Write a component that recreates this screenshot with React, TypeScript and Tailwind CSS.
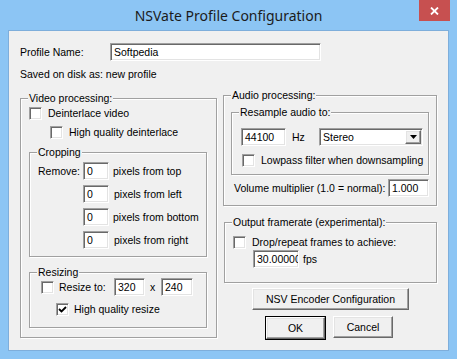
import type { ReactNode } from "react";

const sunken =
  "bg-white border border-t-[#a0a0a0] border-l-[#a0a0a0] border-r-white border-b-white shadow-[inset_1px_1px_0_#696969,inset_-1px_-1px_0_#e3e3e3]";
const raised =
  "bg-[#f0f0f0] border border-t-white border-l-white border-r-[#696969] border-b-[#696969] shadow-[inset_-1px_-1px_0_#a0a0a0,inset_1px_1px_0_#e3e3e3]";

function Check({ checked = false }: { checked?: boolean }) {
  return (
    <div className={`flex h-[13px] w-[13px] shrink-0 items-center justify-center ${sunken}`}>
      {checked && (
        <svg width="9" height="9" viewBox="0 0 9 9">
          <path d="M1 4 L3.5 6.5 L8 2" stroke="#000" strokeWidth="1.8" fill="none" />
        </svg>
      )}
    </div>
  );
}

function Edit({ value, w }: { value: string; w: string }) {
  return (
    <div className={`h-[18px] shrink-0 overflow-hidden whitespace-nowrap pl-[3px] leading-[16px] ${w} ${sunken}`}>
      {value}
    </div>
  );
}

function Group({
  label,
  className,
  children,
}: {
  label: string;
  className: string;
  children: ReactNode;
}) {
  return (
    <div
      className={`relative shrink-0 border border-[#a0a0a0] shadow-[inset_1px_1px_0_#fff,1px_1px_0_#fff] ${className}`}
    >
      <span className="absolute -top-[7px] left-[7px] bg-[#f0f0f0] px-px leading-[13px]">
        {label}
      </span>
      {children}
    </div>
  );
}

function Btn({ children, className }: { children: ReactNode; className: string }) {
  return (
    <div className={`flex h-[22px] items-center justify-center ${raised} ${className}`}>
      {children}
    </div>
  );
}

export default function App() {
  return (
    <div className="flex h-[359px] w-[457px] flex-col bg-[#8cc5f4] font-['Liberation_Sans',Arial,sans-serif] text-[10.5px] text-black">
      {/* title bar */}
      <div className="relative flex h-[30px] shrink-0 items-center justify-center">
        <span className="font-['Noto_Sans',sans-serif] text-[14px] text-[#1b1b1b]">
          NSVate Profile Configuration
        </span>
        <div className="absolute right-[7px] top-0 flex h-[21px] w-[31px] items-center justify-center bg-[#c75050]">
          <svg width="9" height="8" viewBox="0 0 9 8">
            <path d="M1 0.5 L8 7.5 M8 0.5 L1 7.5" stroke="#fff" strokeWidth="1.8" />
          </svg>
        </div>
      </div>

      {/* client */}
      <div className="mx-[8px] flex h-[321px] shrink-0 flex-col bg-[#f0f0f0] pl-[12px] leading-[13px] shadow-[inset_0_0_0_1px_#7eaedb]">
        <div className="mt-[13px] flex h-[18px] items-center">
          <span className="w-[90px]">Profile Name:</span>
          <Edit value="Softpedia" w="w-[211px]" />
        </div>
        <div className="mt-[7px]">Saved on disk as: new profile</div>

        <div className="mt-[14px] flex items-start">
          {/* video */}
          <Group label="Video processing:" className="mt-[3px] h-[240px] w-[197px] pl-[8px] pt-[8px]">
            <div className="flex h-[13px] items-center">
              <Check />
              <span className="ml-[6px]">Deinterlace video</span>
            </div>
            <div className="mt-[6px] flex h-[13px] items-center pl-[21px]">
              <Check />
              <span className="ml-[6px]">High quality deinterlace</span>
            </div>

            <Group label="Cropping" className="mt-[13px] h-[105px] w-[178px] pl-[8px] pt-[9px]">
              <div className="flex flex-col gap-[5px]">
                {["top", "left", "bottom", "right"].map((s, i) => (
                  <div key={s} className="flex h-[18px] items-center">
                    <span className="w-[45px]">{i === 0 ? "Remove:" : ""}</span>
                    <Edit value="0" w="w-[26px]" />
                    <span className={i === 1 || i === 3 ? "ml-[5px]" : "ml-[4px]"}>
                      pixels from {s}
                    </span>
                  </div>
                ))}
              </div>
            </Group>

            <Group label="Resizing" className="mt-[15px] h-[56px] w-[178px] pl-[11px] pt-[5px]">
              <div className="flex h-[18px] items-center">
                <Check />
                <span className="ml-[5px] w-[55px]">Resize to:</span>
                <Edit value="320" w="w-[31px]" />
                <span className="w-[16px] pl-[5px]">x</span>
                <Edit value="240" w="w-[32px]" />
              </div>
              <div className="mt-[7px] flex h-[13px] items-center pl-[15px]">
                <Check checked />
                <span className="ml-[5px]">High quality resize</span>
              </div>
            </Group>
          </Group>

          {/* right column */}
          <div className="ml-[6px] flex w-[214px] flex-col">
            <Group label="Audio processing:" className="h-[111px] w-[214px] pl-[7px] pt-[16px]">
              <Group label="Resample audio to:" className="h-[63px] w-[198px] pl-[9px] pt-[15px]">
                <div className="flex h-[18px] items-center">
                  <Edit value="44100" w="w-[45px]" />
                  <span className="ml-[6px] w-[27px]">Hz</span>
                  <div className={`flex h-[18px] w-[104px] items-center ${sunken}`}>
                    <span className="flex-1 pl-[3px]">Stereo</span>
                    <div className={`mr-px flex h-[14px] w-[16px] items-center justify-center ${raised}`}>
                      <svg width="7" height="4" viewBox="0 0 7 4">
                        <path d="M0 0 H7 L3.5 4 Z" fill="#000" />
                      </svg>
                    </div>
                  </div>
                </div>
                <div className="mt-[8px] flex h-[13px] items-center pl-px">
                  <Check />
                  <span className="ml-[6px]">Lowpass filter when downsampling</span>
                </div>
              </Group>
              <div className="ml-[3px] mt-[4px] flex h-[18px] items-center">
                <span className="w-[154px]">Volume multiplier (1.0 = normal):</span>
                <Edit value="1.000" w="w-[41px]" />
              </div>
            </Group>

            <Group label="Output framerate (experimental):" className="ml-px mt-[16px] h-[61px] w-[213px] pl-[8px] pt-[13px]">
              <div className="flex h-[13px] items-center">
                <Check />
                <span className="ml-[6px]">Drop/repeat frames to achieve:</span>
              </div>
              <div className="ml-[20px] mt-px flex h-[18px] items-center">
                <Edit value="30.00000" w="w-[46px]" />
                <span className="ml-[4px]">fps</span>
              </div>
            </Group>

            <Btn className="ml-[29px] mt-[5px] w-[157px]">NSV Encoder Configuration</Btn>

            <div className="mt-[6px] flex">
              <div className="ml-[42px] border border-black">
                <Btn className="h-[20px] w-[59px]">OK</Btn>
              </div>
              <Btn className="ml-[7px] w-[60px]">Cancel</Btn>
            </div>
          </div>
        </div>
      </div>
    </div>
  );
}
